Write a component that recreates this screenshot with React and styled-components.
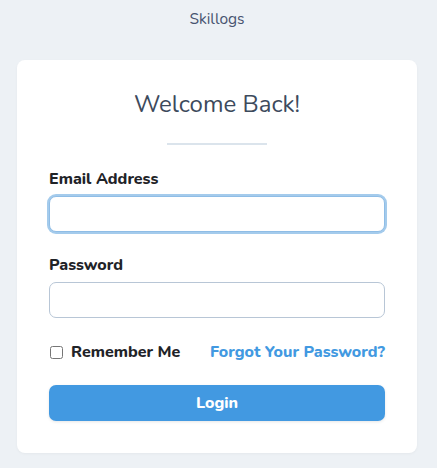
import React from "react";
import styled, { createGlobalStyle } from "styled-components";

const GlobalStyle = createGlobalStyle`
  html, body {
    margin: 0;
    padding: 0;
    background: #edf1f5;
    font-family: "Nunito", "Lato", "Open Sans", sans-serif;
  }
  * { box-sizing: border-box; }
`;

const Page = styled.div`
  width: 437px;
  min-height: 468px;
  padding: 0 20px 0 17px;
  display: flex;
  flex-direction: column;
  align-items: center;
`;

const Brand = styled.div`
  height: 60px;
  padding-top: 8px;
  font-size: 15.5px;
  color: #485470;
  text-align: center;
`;

const Card = styled.div`
  width: 400px;
  background: #fff;
  border-radius: 8px;
  box-shadow: 0 1px 3px rgba(0, 0, 0, 0.04);
  padding: 28px 32px 32px;
`;

const Title = styled.h1`
  margin: 0;
  font-size: 24px;
  font-weight: 400;
  color: #3d4a5c;
  text-align: center;
  line-height: 32px;
`;

const Divider = styled.hr`
  width: 100px;
  border: 0;
  height: 2px;
  background: #dbe4ec;
  margin: 23px auto 24px;
`;

const Field = styled.div`
  display: flex;
  flex-direction: column;
  gap: 7px;
  margin-bottom: ${(p) => p.$mb || 0}px;
`;

const Label = styled.label`
  font-size: 16px;
  font-weight: 800;
  color: #1f2328;
  line-height: 20px;
`;

const Input = styled.input`
  height: 36px;
  width: 100%;
  border-radius: 7px;
  border: 1px solid ${(p) => (p.$focus ? "#8fbde6" : "#b8c6d6")};
  box-shadow: ${(p) => (p.$focus ? "0 0 0 2px #a4cbec" : "none")};
  outline: none;
  font-size: 15px;
  padding: 0 12px;
`;

const Row = styled.div`
  display: flex;
  align-items: center;
  justify-content: space-between;
  margin-top: 23px;
`;

const Check = styled.label`
  display: flex;
  align-items: center;
  gap: 8px;
  font-size: 16px;
  font-weight: 800;
  color: #1f2328;

  input {
    width: 13px;
    height: 13px;
    margin: 0 0 0 1px;
  }
`;

const Link = styled.a`
  font-size: 16px;
  font-weight: 800;
  color: #4299e1;
  text-decoration: none;
`;

const Button = styled.button`
  margin-top: 22px;
  width: 100%;
  height: 36px;
  border: 0;
  border-radius: 7px;
  background: #4299e1;
  color: #fff;
  font-family: inherit;
  font-size: 16px;
  font-weight: 800;
  box-shadow: 0 1px 3px rgba(0, 0, 0, 0.1);
`;

export default function App() {
  return (
    <>
      <GlobalStyle />
      <Page>
        <Brand>Skillogs</Brand>
        <Card>
          <Title>Welcome Back!</Title>
          <Divider />
          <Field $mb={23}>
            <Label>Email Address</Label>
            <Input type="email" $focus />
          </Field>
          <Field>
            <Label>Password</Label>
            <Input type="password" />
          </Field>
          <Row>
            <Check>
              <input type="checkbox" />
              Remember Me
            </Check>
            <Link href="#">Forgot Your Password?</Link>
          </Row>
          <Button>Login</Button>
        </Card>
      </Page>
    </>
  );
}
